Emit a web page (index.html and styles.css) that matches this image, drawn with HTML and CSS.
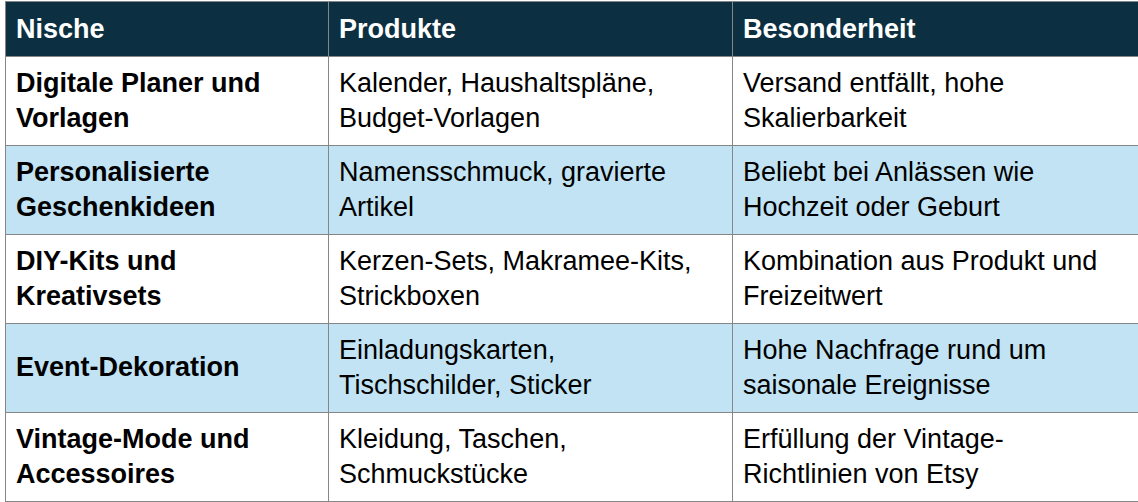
FILE: index.html
```html
<!DOCTYPE html>
<html lang="de">
<head>
<meta charset="utf-8">
<title>Nischen</title>
<link rel="stylesheet" href="styles.css">
</head>
<body>
<table class="niche-table">
  <colgroup>
    <col class="col-a">
    <col class="col-b">
    <col class="col-c">
  </colgroup>
  <thead>
    <tr>
      <th>Nische</th>
      <th>Produkte</th>
      <th>Besonderheit</th>
    </tr>
  </thead>
  <tbody>
    <tr>
      <td class="name">Digitale Planer und Vorlagen</td>
      <td>Kalender, Haushaltspläne, Budget-Vorlagen</td>
      <td>Versand entfällt, hohe Skalierbarkeit</td>
    </tr>
    <tr class="alt">
      <td class="name">Personalisierte Geschenkideen</td>
      <td>Namensschmuck, gravierte Artikel</td>
      <td>Beliebt bei Anlässen wie Hochzeit oder Geburt</td>
    </tr>
    <tr>
      <td class="name">DIY-Kits und Kreativsets</td>
      <td>Kerzen-Sets, Makramee-Kits, Strickboxen</td>
      <td>Kombination aus Produkt und Freizeitwert</td>
    </tr>
    <tr class="alt">
      <td class="name">Event-Dekoration</td>
      <td>Einladungskarten, Tischschilder, Sticker</td>
      <td>Hohe Nachfrage rund um saisonale Ereignisse</td>
    </tr>
    <tr>
      <td class="name">Vintage-Mode und Accessoires</td>
      <td>Kleidung, Taschen, Schmuckstücke</td>
      <td>Erfüllung der Vintage-Richtlinien von Etsy</td>
    </tr>
  </tbody>
</table>
</body>
</html>
```
FILE: styles.css
```css
html, body {
  background: #ffffff;
}
body {
  margin: 1px 0 0 5px;
  font-family: "Liberation Sans", Arial, Helvetica, sans-serif;
  font-size: 27px;
  line-height: 34.5px;
  color: #000;
}
.niche-table {
  border-collapse: collapse;
  table-layout: fixed;
  width: 1133px;
}
.col-a { width: 323px; }
.col-b { width: 404px; }
.col-c { width: 406px; }
.niche-table th,
.niche-table td {
  border: 1px solid #868686;
  padding: 9.5px 10px;
  text-align: left;
  vertical-align: middle;
}
.niche-table th {
  background: #0c2f42;
  color: #ffffff;
  font-weight: bold;
}
.niche-table td.name {
  font-weight: bold;
}
.niche-table tr.alt td {
  background: #c1e3f3;
}
```
